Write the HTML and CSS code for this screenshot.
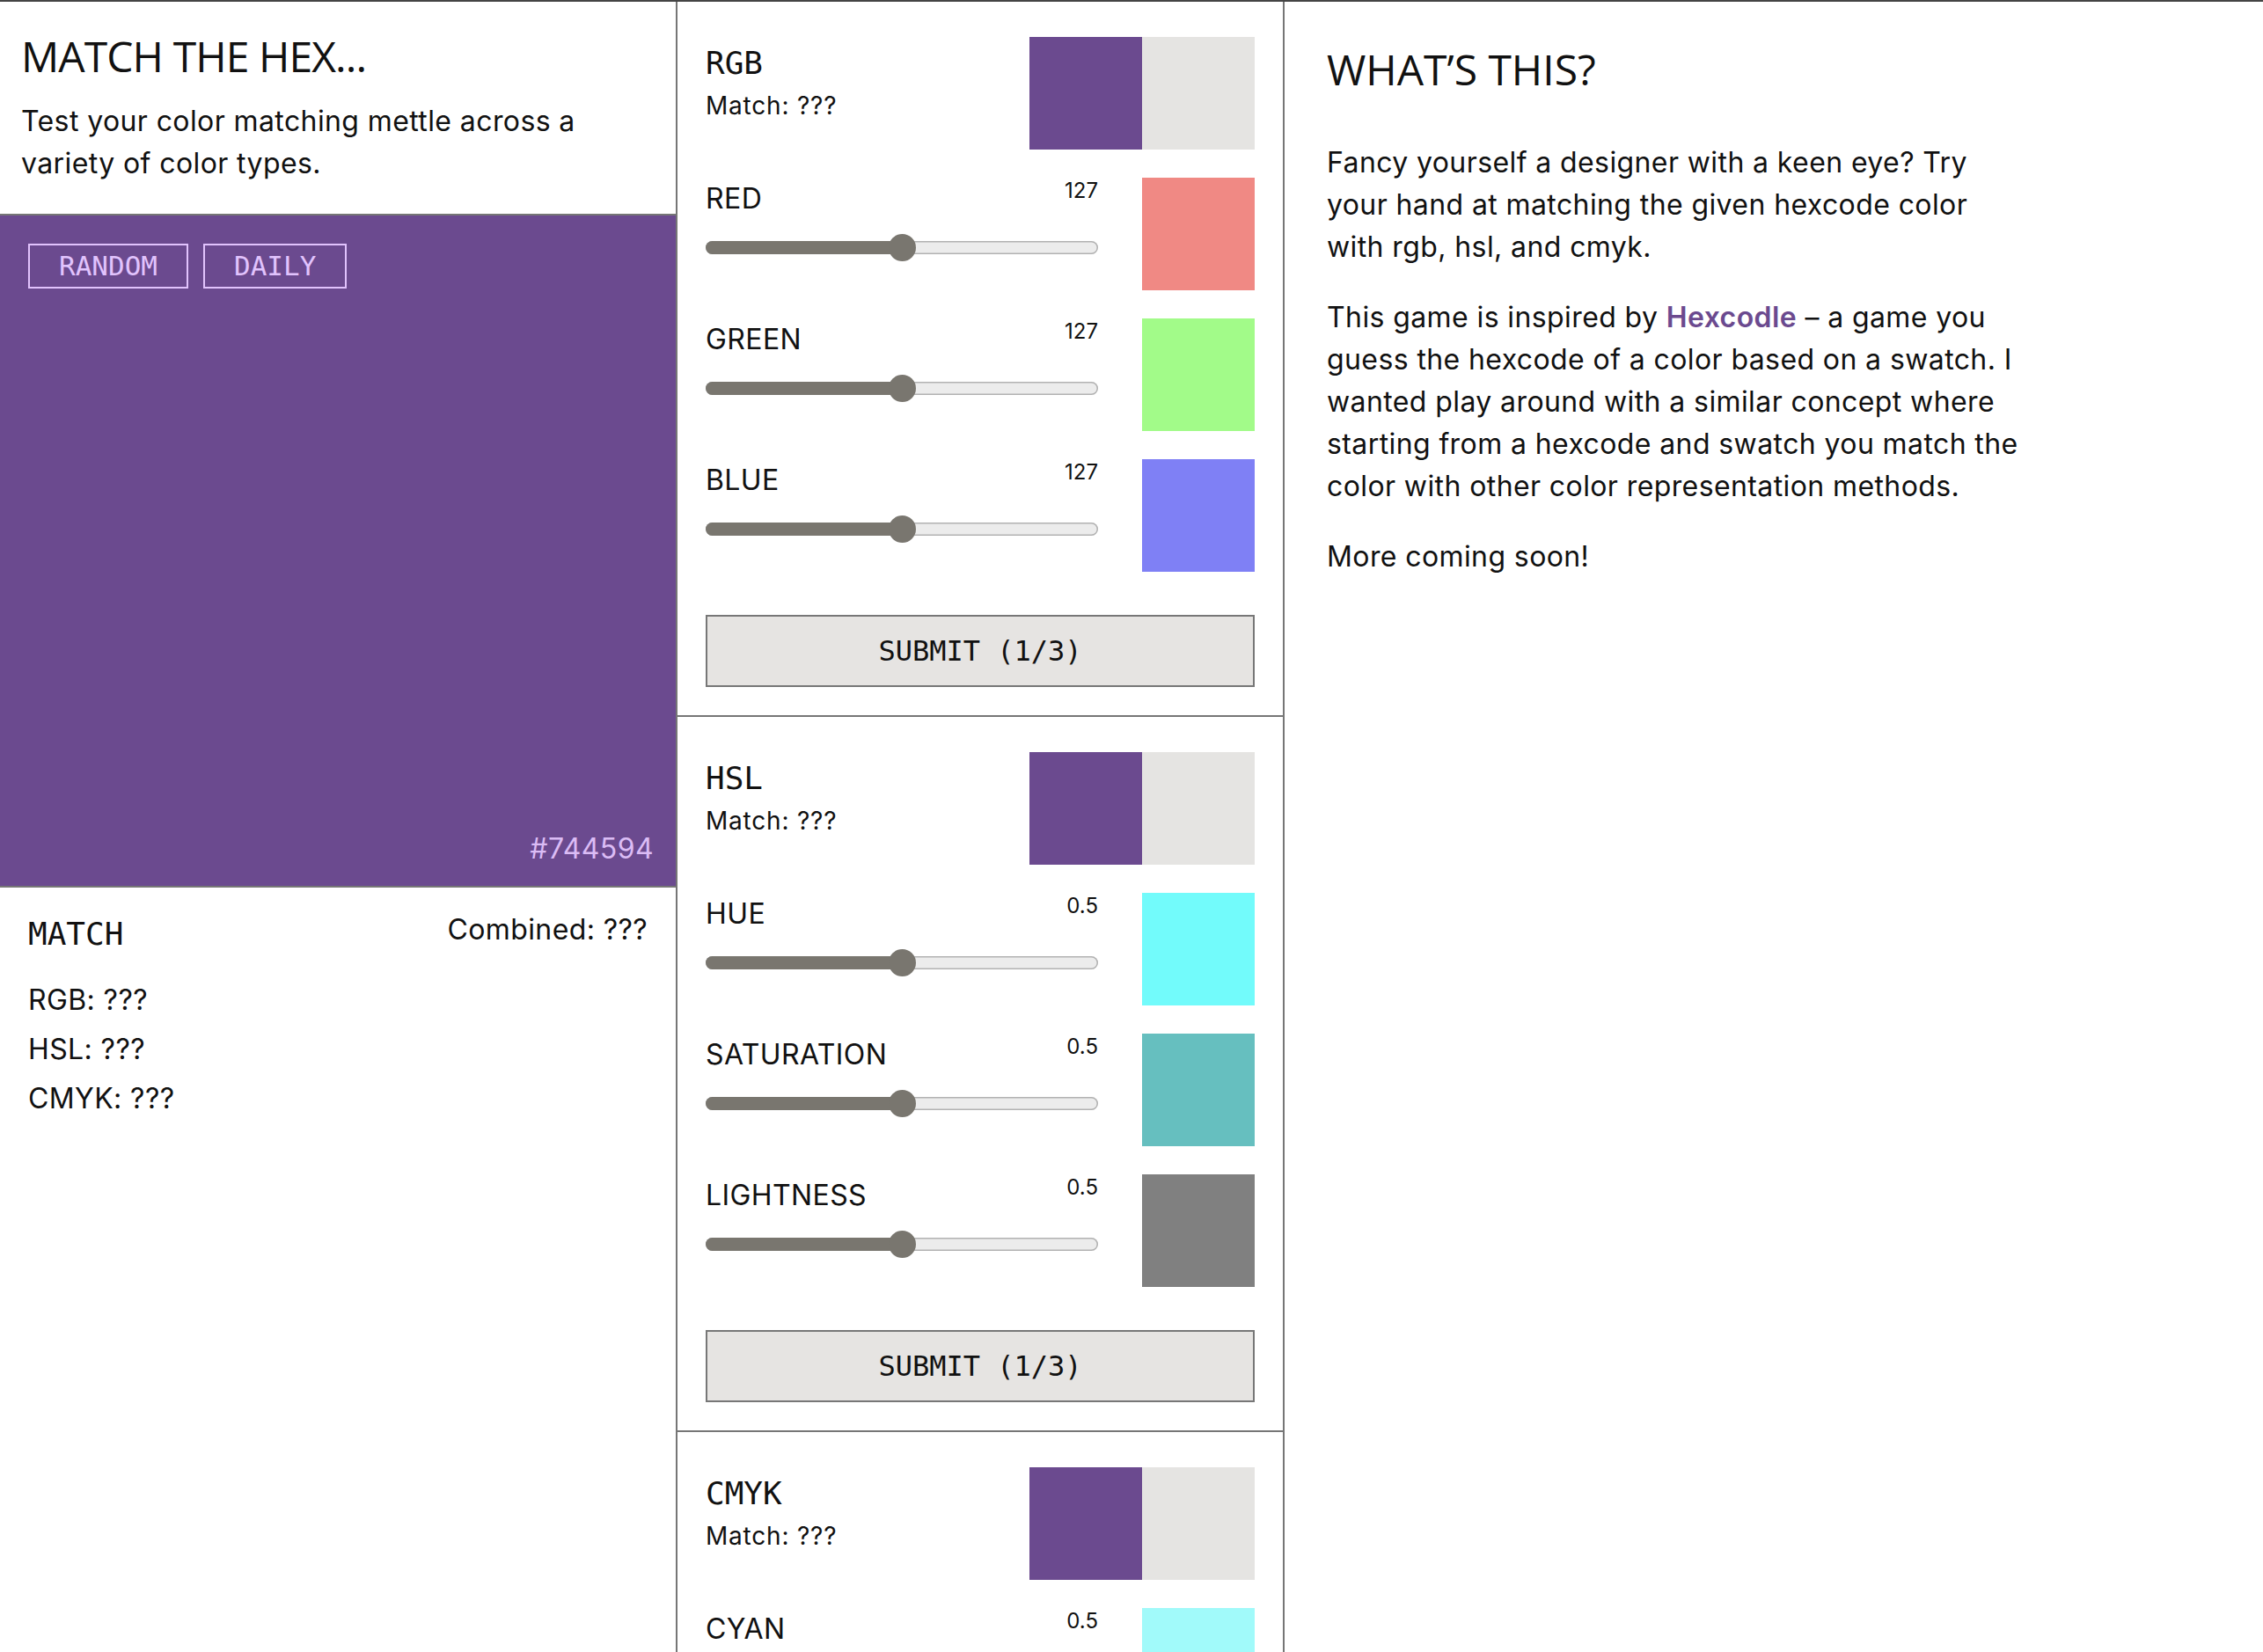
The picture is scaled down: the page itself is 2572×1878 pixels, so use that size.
FILE: index.html
```html
<!DOCTYPE html>
<html lang="en">
<head>
<meta charset="utf-8">
<title>Match the Hex</title>
<link rel="stylesheet" href="styles.css">
</head>
<body>
<div class="page">
  <aside class="col-left">
    <header class="intro">
      <h1 class="title title-main">MATCH THE HEX...</h1>
      <p class="lead">Test your color matching mettle across a variety of color types.</p>
    </header>
    <section class="target">
      <div class="modes">
        <button class="mode">RANDOM</button>
        <button class="mode">DAILY</button>
      </div>
      <div class="hex">#744594</div>
    </section>
    <section class="score">
      <div class="score-head">
        <h2 class="mono-h">MATCH</h2>
        <span class="combined">Combined: ???</span>
      </div>
      <ul class="score-list">
        <li>RGB: ???</li>
        <li>HSL: ???</li>
        <li>CMYK: ???</li>
      </ul>
    </section>
  </aside>

  <main class="col-mid">
    <section class="panel">
      <div class="panel-head">
        <div class="panel-info">
          <h2 class="mono-h">RGB</h2>
          <p class="match">Match: ???</p>
        </div>
        <div class="compare">
          <div class="swatch sw-target"></div>
          <div class="swatch sw-empty"></div>
        </div>
      </div>
      <div class="row">
        <div class="control">
          <div class="label-line"><span class="label">RED</span><span class="value">127</span></div>
          <div class="slider"><div class="track"><div class="fill" style="width:50%"></div></div><div class="thumb" style="left:50%"></div></div>
        </div>
        <div class="swatch sw-red"></div>
      </div>
      <div class="row">
        <div class="control">
          <div class="label-line"><span class="label">GREEN</span><span class="value">127</span></div>
          <div class="slider"><div class="track"><div class="fill" style="width:50%"></div></div><div class="thumb" style="left:50%"></div></div>
        </div>
        <div class="swatch sw-green"></div>
      </div>
      <div class="row">
        <div class="control">
          <div class="label-line"><span class="label">BLUE</span><span class="value">127</span></div>
          <div class="slider"><div class="track"><div class="fill" style="width:50%"></div></div><div class="thumb" style="left:50%"></div></div>
        </div>
        <div class="swatch sw-blue"></div>
      </div>
      <button class="submit">SUBMIT (1/3)</button>
    </section>

    <section class="panel">
      <div class="panel-head">
        <div class="panel-info">
          <h2 class="mono-h">HSL</h2>
          <p class="match">Match: ???</p>
        </div>
        <div class="compare">
          <div class="swatch sw-target"></div>
          <div class="swatch sw-empty"></div>
        </div>
      </div>
      <div class="row">
        <div class="control">
          <div class="label-line"><span class="label">HUE</span><span class="value">0.5</span></div>
          <div class="slider"><div class="track"><div class="fill" style="width:50%"></div></div><div class="thumb" style="left:50%"></div></div>
        </div>
        <div class="swatch sw-hue"></div>
      </div>
      <div class="row">
        <div class="control">
          <div class="label-line"><span class="label">SATURATION</span><span class="value">0.5</span></div>
          <div class="slider"><div class="track"><div class="fill" style="width:50%"></div></div><div class="thumb" style="left:50%"></div></div>
        </div>
        <div class="swatch sw-sat"></div>
      </div>
      <div class="row">
        <div class="control">
          <div class="label-line"><span class="label">LIGHTNESS</span><span class="value">0.5</span></div>
          <div class="slider"><div class="track"><div class="fill" style="width:50%"></div></div><div class="thumb" style="left:50%"></div></div>
        </div>
        <div class="swatch sw-light"></div>
      </div>
      <button class="submit">SUBMIT (1/3)</button>
    </section>

    <section class="panel">
      <div class="panel-head">
        <div class="panel-info">
          <h2 class="mono-h">CMYK</h2>
          <p class="match">Match: ???</p>
        </div>
        <div class="compare">
          <div class="swatch sw-target"></div>
          <div class="swatch sw-empty"></div>
        </div>
      </div>
      <div class="row">
        <div class="control">
          <div class="label-line"><span class="label">CYAN</span><span class="value">0.5</span></div>
          <div class="slider"><div class="track"><div class="fill" style="width:50%"></div></div><div class="thumb" style="left:50%"></div></div>
        </div>
        <div class="swatch sw-cyan"></div>
      </div>
      <div class="row">
        <div class="control">
          <div class="label-line"><span class="label">MAGENTA</span><span class="value">0.5</span></div>
          <div class="slider"><div class="track"><div class="fill" style="width:50%"></div></div><div class="thumb" style="left:50%"></div></div>
        </div>
        <div class="swatch sw-magenta"></div>
      </div>
      <div class="row">
        <div class="control">
          <div class="label-line"><span class="label">YELLOW</span><span class="value">0.5</span></div>
          <div class="slider"><div class="track"><div class="fill" style="width:50%"></div></div><div class="thumb" style="left:50%"></div></div>
        </div>
        <div class="swatch sw-yellow"></div>
      </div>
      <div class="row">
        <div class="control">
          <div class="label-line"><span class="label">BLACK</span><span class="value">0.5</span></div>
          <div class="slider"><div class="track"><div class="fill" style="width:50%"></div></div><div class="thumb" style="left:50%"></div></div>
        </div>
        <div class="swatch sw-black"></div>
      </div>
      <button class="submit">SUBMIT (1/3)</button>
    </section>
  </main>

  <article class="col-right">
    <h1 class="title about-title">WHAT’S THIS?</h1>
    <p class="about">Fancy yourself a designer with a keen eye? Try<br>your hand at matching the given hexcode color<br>with rgb, hsl, and cmyk.</p>
    <p class="about">This game is inspired by <a class="link" href="#">Hexcodle</a> – a game you<br>guess the hexcode of a color based on a swatch. I<br>wanted play around with a similar concept where<br>starting from a hexcode and swatch you match the<br>color with other color representation methods.</p>
    <p class="about">More coming soon!</p>
  </article>
</div>
</body>
</html>
```
FILE: styles.css
```css
* { box-sizing: border-box; }

html, body {
  margin: 0;
  padding: 0;
  background: #ffffff;
}

body {
  font-family: "Inter", "Open Sans", sans-serif;
  font-size: 32px;
  line-height: 48px;
  letter-spacing: 0.4px;
  color: #111111;
}

.page {
  display: grid;
  grid-template-columns: 770px 690px 1fr;
  border-top: 2px solid #454545;
  min-height: 1876px;
}

/* ---------- shared ---------- */
.title {
  margin: 0;
  font-family: "Open Sans", "Noto Sans", sans-serif;
  font-weight: 400;
  font-size: 48px;
  line-height: 57.6px;
  letter-spacing: 0;
  color: #111111;
}

.title-main { letter-spacing: -0.9px; }

.mono-h {
  margin: 0;
  font-family: "DejaVu Sans Mono", "Liberation Mono", monospace;
  font-weight: 400;
  font-size: 36px;
  line-height: 41px;
  letter-spacing: 0;
}

/* ---------- left column ---------- */
.col-left {
  display: flex;
  flex-direction: column;
  border-right: 2px solid #767676;
}

.intro {
  padding: 33px 24px 33px 24px;
  border-bottom: 2px solid #767676;
}

.intro .title { margin-bottom: 21px; }

.lead { margin: 0; }

.target {
  height: 764px;
  background: #6b4a8f;
  border-bottom: 2px solid #767676;
  padding: 32px 25px 18px 32px;
  display: flex;
  flex-direction: column;
  justify-content: space-between;
}

.modes {
  display: flex;
  gap: 17px;
}

.mode {
  height: 51px;
  padding: 0 33px;
  background: transparent;
  border: 2px solid #e1c3fd;
  color: #e1c3fd;
  font-family: "DejaVu Sans Mono", "Liberation Mono", monospace;
  font-size: 31px;
  line-height: 47px;
  letter-spacing: 0;
  cursor: pointer;
}

.hex {
  align-self: flex-end;
  color: #dbbcf5;
}

.score {
  padding: 32px;
}

.score-head {
  display: flex;
  justify-content: space-between;
  align-items: flex-start;
}

.combined { line-height: 32px; }

.score-list {
  list-style: none;
  margin: 31px 0 0;
  padding: 0;
  display: flex;
  flex-direction: column;
  gap: 8px;
}

/* ---------- middle column ---------- */
.col-mid {
  border-right: 2px solid #767676;
}

.panel {
  padding: 40px 32px 32px;
  border-bottom: 2px solid #767676;
}

.panel-head {
  display: flex;
  justify-content: space-between;
  align-items: flex-start;
}

.panel-info { padding-top: 3px; }

.panel-info .mono-h { line-height: 54px; }

.match {
  margin: 0;
  font-size: 28px;
  line-height: 42px;
  letter-spacing: 0.8px;
}

.compare { display: flex; }

.swatch {
  width: 128px;
  height: 128px;
  flex: none;
}

.sw-target { background: #6b4a8f; }
.sw-empty { background: #e5e4e2; }
.sw-red { background: #f08984; }
.sw-green { background: #a2fb89; }
.sw-blue { background: #7f80f5; }
.sw-hue { background: #72fbfb; }
.sw-sat { background: #66bfbf; }
.sw-light { background: #808080; }
.sw-cyan { background: #a1fafa; }
.sw-magenta { background: #faa1fa; }
.sw-yellow { background: #fafaa1; }
.sw-black { background: #a0a0a0; }

.row {
  display: flex;
  gap: 50px;
  margin-top: 32px;
}

.control {
  flex: 1;
  min-width: 0;
}

.label-line {
  display: flex;
  justify-content: space-between;
  align-items: flex-start;
}

.value {
  font-size: 24px;
  line-height: 24px;
  margin-top: 3px;
  letter-spacing: 0;
}

.slider {
  position: relative;
  height: 31px;
  margin-top: 16px;
  display: flex;
  align-items: center;
}

.track {
  flex: 1;
  height: 15px;
  border-radius: 8px;
  background: #ececec;
  box-shadow: inset 0 0 0 1.5px #b2b2b2;
  overflow: hidden;
}

.fill {
  height: 100%;
  background: #79766f;
}

.thumb {
  position: absolute;
  top: 0;
  width: 31px;
  height: 31px;
  margin-left: -15.5px;
  border-radius: 50%;
  background: #79766f;
}

.submit {
  display: block;
  width: 100%;
  height: 82px;
  margin-top: 49px;
  background: #e6e4e2;
  border: 2px solid #777777;
  color: #111111;
  font-family: "DejaVu Sans Mono", "Liberation Mono", monospace;
  font-size: 32px;
  letter-spacing: 0;
  cursor: pointer;
}

/* ---------- right column ---------- */
.col-right {
  padding: 48px 48px 0 48px;
}

.about-title { margin-bottom: 53px; }

.about {
  margin: 0 0 32px;
}

.link {
  color: #6b4a8f;
  font-weight: 600;
  text-decoration: none;
}
```
